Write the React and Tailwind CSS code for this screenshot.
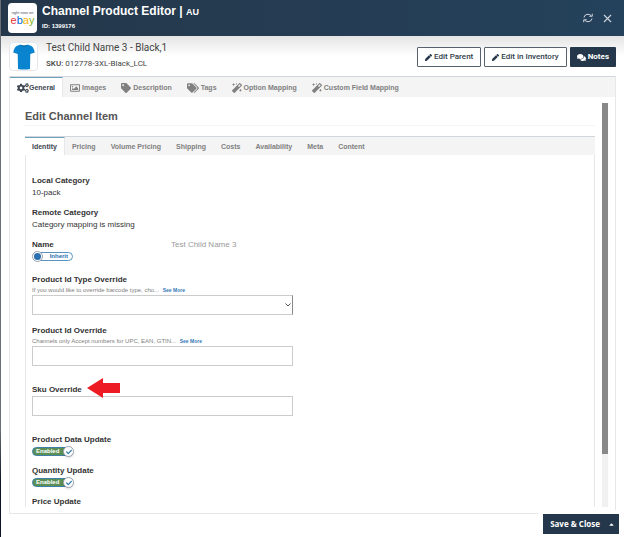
import { useState } from 'react'
import clsx from 'clsx'
import { X } from 'lucide-react'
import { FaCaretUp, FaCheck, FaCogs, FaComments, FaMagic, FaPen, FaRegImage, FaTag, FaTags } from 'react-icons/fa'

const mainTabs = [
    { label: 'General', icon: FaCogs },
    { label: 'Images', icon: FaRegImage },
    { label: 'Description', icon: FaTag },
    { label: 'Tags', icon: FaTags },
    { label: 'Option Mapping', icon: FaMagic },
    { label: 'Custom Field Mapping', icon: FaMagic },
]

const itemTabs = ['Identity', 'Pricing', 'Volume Pricing', 'Shipping', 'Costs', 'Availability', 'Meta', 'Content']

function EbayLogo() {
    return (
        <div className="w-[29px] h-[30px] shrink-0 rounded-sm bg-white flex flex-col items-center justify-center">
            <span className="text-[4px] leading-[4px] text-gray-600 whitespace-nowrap">right now on</span>
            <span className="text-[11px] leading-[10px]">
                <span className="text-[#e53238]">e</span>
                <span className="text-[#0064d2]">b</span>
                <span className="text-[#f5af02]">a</span>
                <span className="text-[#86b817]">y</span>
            </span>
        </div>
    )
}

function ShirtIcon() {
    return (
        <svg viewBox="0 0 24 28" className="w-6 h-7" aria-hidden="true">
            <path d="M8.500 1.500 C10 3 14 3 15.500 1.500 L19.500 3 C21.500 4.500 22.300 7.500 22.800 9.500 L18.300 11 L18 26 Q12 27.200 6 26 L5.700 11 L1.200 9.500 C1.700 7.500 2.500 4.500 4.500 3 Z" fill="#0b84d0" />
            <path d="M8.500 1.500 C10 4.500 14 4.500 15.500 1.500 C14 2.800 10 2.800 8.500 1.500 Z" fill="#0a5f9c" />
        </svg>
    )
}

function RefreshIcon() {
    return (
        <svg viewBox="0 0 20 20" className="w-[10px] h-[10px]" fill="none" stroke="currentColor" strokeWidth="2" aria-hidden="true">
            <path d="M2 9 A8 7 0 0 1 16.500 5.500 M18.500 1.500 V6.500 H12.500" />
            <path d="M18 11 A8 7 0 0 1 3.500 14.500 M1.500 18.500 V13.500 H7.500" />
        </svg>
    )
}

function TabBar({ children, label }) {
    return (
        <div role="tablist" aria-label={label} className="flex border-t border-gray-300 bg-[#f4f4f4]">
            {children}
        </div>
    )
}

function Tab({ active, onClick, className, children }) {
    return (
        <button
            type="button"
            role="tab"
            aria-selected={active}
            onClick={onClick}
            className={clsx(
                'flex items-center whitespace-nowrap px-[7px] border-t border-r text-[7px] leading-3 font-bold',
                active ? 'border-t-[#6fa3bb] border-r-gray-200 bg-white text-[#3c4650]' : 'border-transparent text-[#808080]',
                className
            )}
        >
            {children}
        </button>
    )
}

function Toggle({ id, defaultOn }) {
    const [on, setOn] = useState(defaultOn)

    return (
        <label htmlFor={id} className="flex w-fit h-[11px] items-center cursor-pointer">
            <input id={id} type="checkbox" className="sr-only" checked={on} onChange={() => setOn(!on)} />
            {on ? (
                <>
                    <span className="w-[35px] h-[9px] pl-[3px] rounded-l-full border border-[#3f7fa6] bg-[#5b8f55] text-white text-[6px] leading-[7px] font-bold">Enabled</span>
                    <span className="w-[11px] h-[11px] -ml-1 rounded-full border border-gray-400 bg-white shadow flex items-center justify-center">
                        <FaCheck className="w-[6px] h-[6px] text-[#2f7ea8]" />
                    </span>
                </>
            ) : (
                <>
                    <span className="relative w-[11px] h-[11px] rounded-full border border-gray-400 bg-white flex items-center justify-center">
                        <span className="w-[7px] h-[7px] rounded-full bg-[#2a6fb0]" />
                    </span>
                    <span className="w-[34px] h-[9px] -ml-1 pr-1 rounded-r-full border border-[#5b93c0] text-[#2a6fb0] text-[6px] leading-[7px] font-bold text-right">Inherit</span>
                </>
            )}
        </label>
    )
}

function HelpText({ children }) {
    return (
        <p className="pt-px pb-px text-[6px] leading-[7px] text-[#808080] whitespace-nowrap">
            {children}{' '}
            <a href="#more" className="ml-[2px] text-[#337ab7] font-bold text-[5px]">See More</a>
        </p>
    )
}

function StaticField({ label, value }) {
    return (
        <div>
            <div className="font-bold">{label}</div>
            <div>{value}</div>
        </div>
    )
}

function UpdateField({ id, label }) {
    return (
        <div>
            <label htmlFor={id} className="block w-fit font-bold">{label}</label>
            <Toggle id={id} defaultOn />
        </div>
    )
}

function IdentityForm() {
    return (
        <form className="flex flex-col px-[6px] pt-5 text-[8px] leading-3 text-[#333333]">
            <div className="flex flex-col gap-2">
                <StaticField label="Local Category" value="10-pack" />
                <StaticField label="Remote Category" value="Category mapping is missing" />
                <div className="flex">
                    <div className="w-[139px]">
                        <label htmlFor="name" className="block w-fit font-bold">Name</label>
                        <Toggle id="name" defaultOn={false} />
                    </div>
                    <span className="text-[#999999]">Test Child Name 3</span>
                </div>
            </div>

            <div className="w-[47%] mt-3">
                <label htmlFor="idType" className="block w-fit font-bold">Product Id Type Override</label>
                <HelpText>If you would like to override barcode type, cho...</HelpText>
                <div className="relative">
                    <select id="idType" className="block w-full h-5 appearance-none border border-[#cccccc] border-r-[#888888] bg-white">
                        <option></option>
                        <option>UPC</option>
                        <option>EAN</option>
                        <option>GTIN</option>
                    </select>
                    <svg viewBox="0 0 6 4" className="absolute right-[2px] top-2 w-[6px] h-1 pointer-events-none" fill="none" stroke="#555555" aria-hidden="true">
                        <path d="M0.500 0.500 L3 3 L5.500 0.500" />
                    </svg>
                </div>

                <label htmlFor="idOverride" className="block w-fit mt-[10px] font-bold">Product Id Override</label>
                <HelpText>Channels only Accept numbers for UPC, EAN, GTIN...</HelpText>
                <input id="idOverride" type="text" className="block w-full h-5 px-1 border border-[#cccccc]" />

                <div className="relative w-fit mt-[18px]">
                    <label htmlFor="sku" className="block font-bold">Sku Override</label>
                    <svg viewBox="0 0 33 20" className="absolute left-full -top-[6px] ml-[5px] w-[33px] h-5" aria-hidden="true">
                        <path d="M0 10 L16 0 V5 H33 V15 H16 V20 Z" fill="#ed1c24" />
                    </svg>
                </div>
                <input id="sku" type="text" className="block w-full h-5 px-1 border border-[#cccccc]" />
            </div>

            <div className="flex flex-col gap-2 mt-[18px]">
                <UpdateField id="productData" label="Product Data Update" />
                <UpdateField id="quantity" label="Quantity Update" />
                <UpdateField id="price" label="Price Update" />
            </div>
        </form>
    )
}

export default function App() {
    const [mainTab, setMainTab] = useState('General')
    const [itemTab, setItemTab] = useState('Identity')

    return (
        <div className="h-screen flex bg-white font-['Liberation_Sans',Arial,sans-serif]">
            <div className="w-px shrink-0 bg-gradient-to-b from-[#6b6f76] from-80% to-[#0c1524] to-90%" />

            <div className="flex-1 min-w-0 flex flex-col">
                {/* Title bar */}
                <header className="h-9 shrink-0 flex items-center pl-[7px] pr-[10px] bg-gradient-to-r from-[#25374a] to-[#24425c] text-white">
                    <EbayLogo />
                    <div className="ml-[5px]">
                        <h1 className="text-[12px] leading-[15px] font-bold">
                            Channel Product Editor | <span className="text-[9px]">AU</span>
                        </h1>
                        <p className="text-[6px] leading-3 font-bold">ID: 1399176</p>
                    </div>
                    <div className="ml-auto flex items-center gap-2 text-gray-300">
                        <button type="button" aria-label="Refresh"><RefreshIcon /></button>
                        <button type="button" aria-label="Close"><X className="w-[13px] h-[13px]" strokeWidth={2} /></button>
                    </div>
                </header>

                {/* Product summary */}
                <section className="h-10 shrink-0 flex items-start pl-2 pr-2 pt-[6px] bg-gradient-to-b from-[#e4e4e4] to-white to-50%">
                    <div className="w-[29px] h-[29px] shrink-0 rounded-sm border border-gray-200 bg-white flex items-center justify-center">
                        <ShirtIcon />
                    </div>
                    <div className="ml-2">
                        <h2 className="text-[10px] leading-3 text-[#444444] font-[Roboto,sans-serif]">Test Child Name 3 - Black,1</h2>
                        <p className="mt-1 text-[8px] leading-3 text-[#444444] font-[Roboto,sans-serif]">
                            <span className="font-medium">SKU:</span> 012778-3XL-Black_LCL
                        </p>
                    </div>
                    <div className="ml-auto mt-[5px] flex gap-[3px] text-[8px] leading-3 font-medium font-[Roboto,sans-serif] text-[#2f3d4b]">
                        <button type="button" className="h-5 px-[7px] flex items-center gap-[2px] rounded-[1px] border border-[#56636f] bg-white">
                            <FaPen className="w-[7px] h-[7px] text-[#25374a]" /> Edit Parent
                        </button>
                        <button type="button" className="h-5 px-[7px] flex items-center gap-[2px] rounded-[1px] border border-[#56636f] bg-white">
                            <FaPen className="w-[7px] h-[7px] text-[#25374a]" /> Edit in Inventory
                        </button>
                        <button type="button" className="h-5 px-[7px] flex items-center gap-[2px] rounded-[1px] bg-[#25374a] font-bold text-white">
                            <FaComments className="w-[9px] h-[9px]" /> Notes
                        </button>
                    </div>
                </section>

                <main className="flex-1 min-h-0 mx-2 flex flex-col border-x border-b border-gray-200">
                    <TabBar label="Product sections">
                        {mainTabs.map(({ label, icon: Icon }) => (
                            <Tab
                                key={label}
                                active={mainTab === label}
                                onClick={() => setMainTab(label)}
                                className={clsx('h-5', label === 'General' ? 'gap-0' : 'gap-[2px]')}
                            >
                                <Icon className={clsx('h-[10px] shrink-0', label === 'General' || label === 'Tags' ? 'w-3' : 'w-[10px]')} /> {label}
                            </Tab>
                        ))}
                    </TabBar>

                    <div className="flex-1 min-h-0 flex pt-[6px] pb-[6px] pl-[15px] pr-[7px]">
                        <div className="flex-1 min-w-0 flex flex-col">
                            <h3 className="pt-[6px] pb-px border-b border-gray-100 text-[11px] leading-[15px] font-bold text-[#555555]">Edit Channel Item</h3>
                            <div className="flex-1 min-h-0 flex flex-col mt-[10px]">
                                <TabBar label="Item sections">
                                    {itemTabs.map((label) => (
                                        <Tab key={label} active={itemTab === label} onClick={() => setItemTab(label)} className="h-[18px]">
                                            {label}
                                        </Tab>
                                    ))}
                                </TabBar>
                                <div className="flex-1 min-h-0 overflow-hidden border-x border-gray-200">
                                    <IdentityForm />
                                </div>
                            </div>
                        </div>
                        {/* Scroll track */}
                        <div className="w-[6px] ml-[7px] bg-[#f1f1f1]">
                            <div className="h-[87%] bg-[#888888]" />
                        </div>
                    </div>
                </main>

                <footer className="shrink-0 flex justify-end pb-[3px] pr-[5px]">
                    <div className="relative -mt-1 pt-1 pl-[5px] bg-white">
                        <button type="button" className="h-5 pl-[7px] pr-1 flex items-center gap-2 bg-[#25374a] text-[8px] font-bold text-white font-['Open_Sans',sans-serif]">
                            Save &amp; Close <FaCaretUp className="w-[7px] h-[7px]" />
                        </button>
                    </div>
                </footer>
            </div>
        </div>
    )
}
